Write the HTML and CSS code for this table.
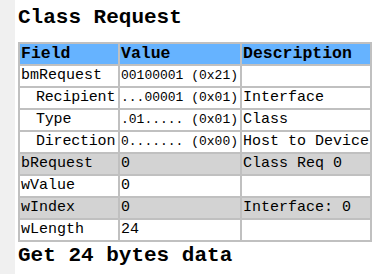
FILE: index.html
```html
<!DOCTYPE html>
<html>
<head>
<meta charset="utf-8">
<link rel="stylesheet" href="styles.css">
</head>
<body>
<div class="page">
  <aside class="rail"></aside>
  <main class="content">
    <h1 class="title">Class Request</h1>
    <table class="req">
      <colgroup><col class="c1"><col class="c2"><col class="c3"></colgroup>
      <thead>
        <tr><th>Field</th><th>Value</th><th>Description</th></tr>
      </thead>
      <tbody>
        <tr><td>bmRequest</td><td class="bits">00100001 (0x21)</td><td></td></tr>
        <tr><td class="sub">Recipient</td><td class="bits">...00001 (0x01)</td><td>Interface</td></tr>
        <tr><td class="sub">Type</td><td class="bits">.01..... (0x01)</td><td>Class</td></tr>
        <tr><td class="sub">Direction</td><td class="bits">0....... (0x00)</td><td>Host to Device</td></tr>
        <tr class="shade"><td>bRequest</td><td>0</td><td>Class Req 0</td></tr>
        <tr><td>wValue</td><td>0</td><td></td></tr>
        <tr class="shade"><td>wIndex</td><td>0</td><td>Interface: 0</td></tr>
        <tr><td>wLength</td><td>24</td><td></td></tr>
      </tbody>
    </table>
    <p class="title tail">Get 24 bytes data</p>
  </main>
</div>
</body>
</html>
```
FILE: styles.css
```css
html, body {
  margin: 0;
  padding: 0;
  background: #ffffff;
}
.page {
  display: flex;
  min-height: 274px;
  font-family: "Liberation Mono", "DejaVu Sans Mono", monospace;
  color: #000;
}
.rail {
  width: 15px;
  flex: none;
  background: #f0f0f0;
}
.content {
  padding-left: 3px;
  padding-top: 6px;
}
.title {
  margin: 0;
  font-size: 21px;
  line-height: 24px;
  font-weight: bold;
  white-space: nowrap;
}
h1.title {
  margin-bottom: 12px;
}
.tail {
  margin-top: 2px;
}
.req {
  border-collapse: collapse;
  table-layout: fixed;
  width: 352px;
}
.c1 { width: 100px; }
.c2 { width: 122px; }
.c3 { width: 130px; }
.req th, .req td {
  border: 2px solid #c0c0c0;
  padding: 0 0 0 1px;
  height: 20px;
  line-height: 20px;
  font-size: 15px;
  text-align: left;
  white-space: nowrap;
  overflow: hidden;
  vertical-align: middle;
}
.req th {
  background: #66b3ff;
  font-size: 16.5px;
  font-weight: bold;
}
.req td.sub {
  padding-left: 16px;
  letter-spacing: -0.2px;
}
.req td.bits {
  font-size: 13px;
  vertical-align: top;
  line-height: 19px;
}
.req tr.shade td {
  background: #d3d3d3;
}
```
